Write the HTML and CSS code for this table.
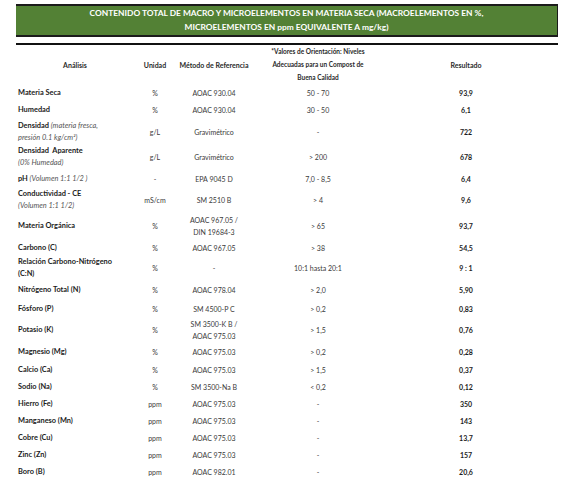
FILE: index.html
```html
<!DOCTYPE html>
<html lang="es">
<head>
    <meta charset="UTF-8">
    <title>Contenido total de macro y microelementos</title>
    <link rel="stylesheet" href="styles.css">
</head>
<body>
    <div class="sheet">
        <div class="banner">
            CONTENIDO TOTAL DE MACRO Y MICROELEMENTOS EN MATERIA SECA (MACROELEMENTOS EN %,<br>
            MICROELEMENTOS EN ppm EQUIVALENTE A mg/kg)
        </div>

        <table class="results">
            <colgroup>
                <col class="c-name">
                <col class="c-unit">
                <col class="c-method">
                <col class="c-ref">
                <col class="c-result">
            </colgroup>
            <thead>
                <tr>
                    <th>Análisis</th>
                    <th>Unidad</th>
                    <th>Método de Referencia</th>
                    <th class="ref-head">*Valores de Orientación: Niveles<br>Adecuadas para un Compost de<br>Buena Calidad</th>
                    <th>Resultado</th>
                </tr>
            </thead>
            <tbody>
                <tr>
                    <td class="name">Materia Seca</td><td>%</td><td>AOAC 930.04</td><td>50 - 70</td><td class="res">93,9</td>
                </tr>
                <tr>
                    <td class="name">Humedad</td><td>%</td><td>AOAC 930.04</td><td>30 - 50</td><td class="res">6,1</td>
                </tr>
                <tr class="double tall">
                    <td class="name">Densidad <em>(materia fresca,<br>presión 0.1 kg/cm²)</em></td><td>g/L</td><td>Gravimétrico</td><td>-</td><td class="res">722</td>
                </tr>
                <tr class="double">
                    <td class="name">Densidad&nbsp; Aparente<br><em>(0% Humedad)</em></td><td>g/L</td><td>Gravimétrico</td><td>&gt; 200</td><td class="res">678</td>
                </tr>
                <tr class="mid">
                    <td class="name">pH <em>(Volumen 1:1 1/2 )</em></td><td>-</td><td>EPA 9045 D</td><td>7,0 - 8,5</td><td class="res">6,4</td>
                </tr>
                <tr class="double">
                    <td class="name">Conductividad - CE<br><em>(Volumen 1:1 1/2)</em></td><td>mS/cm</td><td>SM 2510 B</td><td>&gt; 4</td><td class="res">9,6</td>
                </tr>
                <tr class="double tall">
                    <td class="name">Materia Orgánica</td><td>%</td><td>AOAC 967.05 /<br>DIN 19684-3</td><td>&gt; 65</td><td class="res">93,7</td>
                </tr>
                <tr>
                    <td class="name">Carbono (C)</td><td>%</td><td>AOAC 967.05</td><td>&gt; 38</td><td class="res">54,5</td>
                </tr>
                <tr class="double">
                    <td class="name">Relación Carbono-Nitrógeno<br>(C:N)</td><td>%</td><td>-</td><td>10:1 hasta 20:1</td><td class="res">9 : 1</td>
                </tr>
                <tr class="mid">
                    <td class="name">Nitrógeno Total (N)</td><td>%</td><td>AOAC 978.04</td><td>&gt; 2,0</td><td class="res">5,90</td>
                </tr>
                <tr class="mid">
                    <td class="name">Fósforo (P)</td><td>%</td><td>SM 4500-P C</td><td>&gt; 0,2</td><td class="res">0,83</td>
                </tr>
                <tr class="double">
                    <td class="name">Potasio (K)</td><td>%</td><td>SM 3500-K B /<br>AOAC 975.03</td><td>&gt; 1,5</td><td class="res">0,76</td>
                </tr>
                <tr class="mid">
                    <td class="name">Magnesio (Mg)</td><td>%</td><td>AOAC 975.03</td><td>&gt; 0,2</td><td class="res">0,28</td>
                </tr>
                <tr>
                    <td class="name">Calcio (Ca)</td><td>%</td><td>AOAC 975.03</td><td>&gt; 1,5</td><td class="res">0,37</td>
                </tr>
                <tr>
                    <td class="name">Sodio (Na)</td><td>%</td><td>SM 3500-Na B</td><td>&lt; 0,2</td><td class="res">0,12</td>
                </tr>
                <tr>
                    <td class="name">Hierro (Fe)</td><td>ppm</td><td>AOAC 975.03</td><td>-</td><td class="res">350</td>
                </tr>
                <tr>
                    <td class="name">Manganeso (Mn)</td><td>ppm</td><td>AOAC 975.03</td><td>-</td><td class="res">143</td>
                </tr>
                <tr>
                    <td class="name">Cobre (Cu)</td><td>ppm</td><td>AOAC 975.03</td><td>-</td><td class="res">13,7</td>
                </tr>
                <tr>
                    <td class="name">Zinc (Zn)</td><td>ppm</td><td>AOAC 975.03</td><td>-</td><td class="res">157</td>
                </tr>
                <tr class="last">
                    <td class="name">Boro (B)</td><td>ppm</td><td>AOAC 982.01</td><td>-</td><td class="res">20,6</td>
                </tr>
            </tbody>
        </table>
    </div>
</body>
</html>
```

FILE: styles.css
```css
body {
    margin: 0;
    background: #ffffff;
    font-family: Lato, "Open Sans", sans-serif;
    color: #3a3a3a;
}
.sheet {
    margin: 4px 18px 0 16px;
}
.banner {
    background-color: #538135;
    color: #ffffff;
    font-weight: bold;
    font-size: 8.4px;
    line-height: 14px;
    text-align: center;
    border-top: 2px solid #1b1b1b;
    border-bottom: 2px solid #1b1b1b;
    border-right: 1px solid #1b1b1b;
    padding: 0 0 1px;
}
.results {
    width: 100%;
    margin-top: 6px;
    border-collapse: collapse;
    table-layout: fixed;
    border-top: 2px solid #111111;
}
.c-name { width: 118px; }
.c-unit { width: 42px; }
.c-method { width: 76px; }
.c-ref { width: 132px; }
.c-result { width: 174px; }

.results th {
    font-size: 7px;
    font-weight: bold;
    color: #2a2a2a;
    height: 39px;
    padding: 0;
    text-align: center;
    vertical-align: middle;
}
.results th:last-child {
    padding-right: 10px;
}
.results th.ref-head {
    font-size: 6.5px;
    line-height: 13px;
}
.results td {
    font-size: 7px;
    line-height: 12px;
    height: 17px;
    padding: 0;
    text-align: center;
    vertical-align: middle;
}
.results tr.mid td {
    height: 19px;
}
.results tr.double td {
    height: 24px;
}
.results tr.double.tall td {
    height: 27px;
}
.results td.name {
    text-align: left;
    padding-left: 2px;
    font-weight: bold;
    font-size: 7.4px;
    color: #1c1c1c;
}
.results td.name em {
    font-weight: normal;
    color: #555555;
}
.results td.res {
    font-weight: bold;
    color: #1c1c1c;
    padding-right: 10px;
}
.results tr.last td {
    border-bottom: 1px solid #8a8a8a;
}
```
